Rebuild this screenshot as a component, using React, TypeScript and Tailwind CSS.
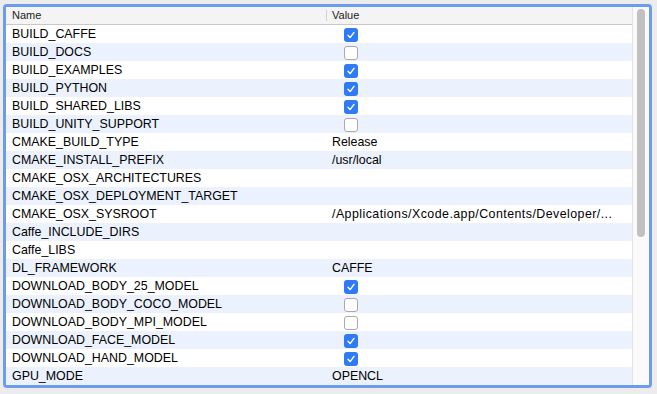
import React from "react";

type Entry = {
	name: string;
	value?: string;
	checked?: boolean;
};

const entries: Entry[] = [
	{ name: "BUILD_CAFFE", checked: true },
	{ name: "BUILD_DOCS", checked: false },
	{ name: "BUILD_EXAMPLES", checked: true },
	{ name: "BUILD_PYTHON", checked: true },
	{ name: "BUILD_SHARED_LIBS", checked: true },
	{ name: "BUILD_UNITY_SUPPORT", checked: false },
	{ name: "CMAKE_BUILD_TYPE", value: "Release" },
	{ name: "CMAKE_INSTALL_PREFIX", value: "/usr/local" },
	{ name: "CMAKE_OSX_ARCHITECTURES", value: "" },
	{ name: "CMAKE_OSX_DEPLOYMENT_TARGET", value: "" },
	{ name: "CMAKE_OSX_SYSROOT", value: "/Applications/Xcode.app/Contents/Developer/..." },
	{ name: "Caffe_INCLUDE_DIRS", value: "" },
	{ name: "Caffe_LIBS", value: "" },
	{ name: "DL_FRAMEWORK", value: "CAFFE" },
	{ name: "DOWNLOAD_BODY_25_MODEL", checked: true },
	{ name: "DOWNLOAD_BODY_COCO_MODEL", checked: false },
	{ name: "DOWNLOAD_BODY_MPI_MODEL", checked: false },
	{ name: "DOWNLOAD_FACE_MODEL", checked: true },
	{ name: "DOWNLOAD_HAND_MODEL", checked: true },
	{ name: "GPU_MODE", value: "OPENCL" },
];

function Checkbox({ checked }: { checked: boolean }) {
	if (!checked) {
		return <div className="ml-[12px] w-[14px] h-[14px] rounded-[3px] bg-white border border-[#a9a9a9]" />;
	}
	return (
		<div className="ml-[12px] w-[14px] h-[14px] rounded-[3px] bg-[#2f7bf6] flex items-center justify-center">
			<svg width="10" height="10" viewBox="0 0 10 10" fill="none">
				<path d="M2 5.3 L4.1 7.6 L8 2.4" stroke="white" strokeWidth="1.4" strokeLinecap="round" strokeLinejoin="round" />
			</svg>
		</div>
	);
}

export default function App() {
	return (
		<div className="w-[657px] h-[394px] bg-[#ececec] pt-[4px] pl-[3px] font-['Liberation_Sans',Arial,sans-serif]">
			<div className="w-[649px] h-[384px] border-[3px] border-[#6d9cea] rounded-[4px] bg-white flex overflow-hidden">
				<div className="w-[626px] flex flex-col">
					<div className="h-[18px] bg-[#f4f4f4] border-b border-[#c9c9c9] flex items-center text-[11px] text-[#222]">
						<div className="w-[320px] pl-[6px]">Name</div>
						<div className="h-[11px] border-l border-[#d2d2d2]" />
						<div className="pl-[5px]">Value</div>
					</div>
					{entries.map((entry, i) => (
						<div
							key={entry.name}
							className={`h-[18px] flex items-center text-[12.4px] text-black ${i % 2 === 1 ? "bg-[#ebf2fd]" : "bg-white"}`}
						>
							<div className="w-[321px] pl-[6px] pt-[1px] whitespace-nowrap">{entry.name}</div>
							<div
								className={`flex-1 pl-[5px] pt-[1px] whitespace-nowrap overflow-hidden ${
									entry.value && entry.value.length > 20 ? "tracking-[0.45px]" : ""
								}`}
							>
								{entry.checked !== undefined ? <Checkbox checked={entry.checked} /> : entry.value}
							</div>
						</div>
					))}
				</div>
				<div className="w-[17px] bg-[#fafafa] border-l border-[#e3e3e3] flex flex-col items-center pt-[2px]">
					<div className="w-[8px] h-[228px] rounded-full bg-[#c1c1c1]" />
				</div>
			</div>
		</div>
	);
}
